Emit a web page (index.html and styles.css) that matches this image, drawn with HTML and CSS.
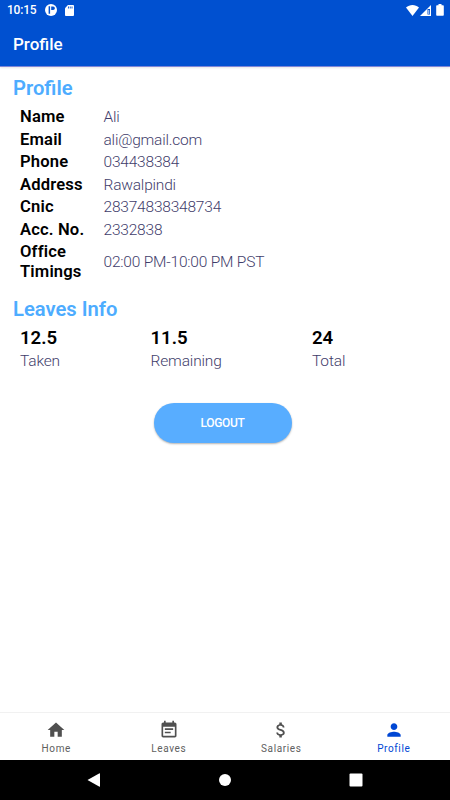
FILE: index.html
```html
<!DOCTYPE html>
<html lang="en">
<head>
    <meta charset="UTF-8">
    <meta name="viewport" content="width=device-width, initial-scale=1.0">
    <title>Profile</title>
    <link rel="stylesheet" href="styles.css">
</head>
<body>

    <header class="app-header">
        <div class="status-bar">
            <span class="clock">10:15</span>
            <svg class="status-app" width="12" height="12" viewBox="0 0 12 12">
                <circle cx="6" cy="6" r="6" fill="#fff"/>
                <path d="M3.6 2.2h1.5v7.6H3.6zM6.2 2.4h1.9a1.7 1.7 0 0 1 0 3.6H6.2z" fill="#0050d0"/>
            </svg>
            <svg class="status-card" width="9" height="11" viewBox="0 0 10 11" preserveAspectRatio="none">
                <path d="M3.2 0H9a1 1 0 0 1 1 1v9a1 1 0 0 1-1 1H1a1 1 0 0 1-1-1V3.2z" fill="#fff"/>
                <path d="M3.3 1.5h1v2h-1zM5.3 1.5h1v2h-1zM7.3 1.5h1v2h-1z" fill="#0050d0"/>
            </svg>
            <div class="status-right">
                <svg width="13" height="11" viewBox="0 0 13 11">
                    <path d="M0 2.6C3.6-.8 9.4-.8 13 2.6L6.5 11z" fill="#fff"/>
                </svg>
                <svg class="signal" width="11" height="11" viewBox="0 0 11 11">
                    <path d="M11 0v11H0z" fill="#fff"/>
                    <path d="M7.5 4h2.5v5.5H7.5z" fill="#0050d0"/>
                    <path d="M8.4 5h.8v4h-.8z" fill="#fff"/>
                </svg>
                <svg class="battery" width="8" height="12" viewBox="0 0 8 12">
                    <path d="M2.5 0h3v1.2H7a.8.8 0 0 1 .8.8v9a.8.8 0 0 1-.8.8H1a.8.8 0 0 1-.8-.8V2a.8.8 0 0 1 .8-.8h1.5z" fill="#fff"/>
                </svg>
            </div>
        </div>
        <h1>Profile</h1>
    </header>

    <main class="content">
        <h2>Profile</h2>
        <dl class="details">
            <dt>Name</dt>
            <dd>Ali</dd>
            <dt>Email</dt>
            <dd>ali@gmail.com</dd>
            <dt>Phone</dt>
            <dd>034438384</dd>
            <dt>Address</dt>
            <dd>Rawalpindi</dd>
            <dt>Cnic</dt>
            <dd>28374838348734</dd>
            <dt>Acc. No.</dt>
            <dd>2332838</dd>
            <dt class="two-lines">Office Timings</dt>
            <dd>02:00 PM-10:00 PM PST</dd>
        </dl>

        <h2>Leaves Info</h2>
        <div class="leaves">
            <div class="leave"><strong>12.5</strong><span>Taken</span></div>
            <div class="leave"><strong>11.5</strong><span>Remaining</span></div>
            <div class="leave"><strong>24</strong><span>Total</span></div>
        </div>

        <button type="button" class="logout">LOGOUT</button>
    </main>

    <nav class="tabs">
        <a class="tab">
            <svg width="20" height="20" viewBox="0 0 24 24"><path d="M10 20v-6h4v6h5v-8h3L12 3 2 12h3v8z"/></svg>
            <span>Home</span>
        </a>
        <a class="tab">
            <svg width="20" height="20" viewBox="0 0 24 24"><path d="M17 10H7v2h10v-2zm2-7h-1V1h-2v2H8V1H6v2H5c-1.11 0-1.99.9-1.99 2L3 19c0 1.1.89 2 2 2h14c1.1 0 2-.9 2-2V5c0-1.1-.9-2-2-2zm0 16H5V8h14v11zm-5-5H7v2h7v-2z"/></svg>
            <span>Leaves</span>
        </a>
        <a class="tab">
            <svg width="20" height="20" viewBox="0 0 24 24"><path d="M11.8 10.9c-2.27-.59-3-1.2-3-2.15 0-1.09 1.01-1.85 2.7-1.85 1.78 0 2.44.85 2.5 2.1h2.21c-.07-1.72-1.12-3.3-3.21-3.81V3h-3v2.16c-1.94.42-3.5 1.68-3.5 3.61 0 2.31 1.91 3.46 4.7 4.13 2.5.6 3 1.48 3 2.41 0 .69-.49 1.79-2.7 1.79-2.06 0-2.87-.92-2.98-2.1h-2.2c.12 2.19 1.76 3.42 3.68 3.83V21h3v-2.15c1.95-.37 3.5-1.5 3.5-3.55 0-2.84-2.43-3.81-4.7-4.4z"/></svg>
            <span>Salaries</span>
        </a>
        <a class="tab active">
            <svg width="20" height="20" viewBox="0 0 24 24"><path d="M12 12c2.21 0 4-1.79 4-4s-1.79-4-4-4-4 1.79-4 4 1.79 4 4 4zm0 2c-2.67 0-8 1.34-8 4v2h16v-2c0-2.66-5.33-4-8-4z"/></svg>
            <span>Profile</span>
        </a>
    </nav>

    <footer class="system-bar">
        <svg width="14" height="14" viewBox="0 0 14 14"><path d="M.5 7 12.5.3q.5-.2.5.4v12.6q0 .6-.5.4z" fill="#fff"/></svg>
        <svg width="14" height="14" viewBox="0 0 14 14"><circle cx="7" cy="7" r="6" fill="#fff"/></svg>
        <svg width="14" height="14" viewBox="0 0 14 14"><rect x=".5" y=".5" width="13" height="13" rx="1" fill="#fff"/></svg>
    </footer>

</body>
</html>
```
FILE: styles.css
```css
body {
    font-family: Roboto, sans-serif;
    background-color: #fff;
    margin: 0;
    height: 800px;
    display: flex;
    flex-direction: column;
    overflow: hidden;
}

svg {
    display: block;
}

.app-header {
    height: 67px;
    box-sizing: border-box;
    background-color: #0050d0;
    border-bottom: 1px solid #7d86d8;
    color: #fff;
    box-shadow: 0 1px 2px rgba(0, 0, 0, 0.1);
}

.status-bar {
    display: flex;
    align-items: center;
    height: 20px;
    padding: 0 6px 0 7px;
}

.clock {
    font-size: 12px;
    font-weight: 500;
    letter-spacing: -0.2px;
    line-height: 20px;
    width: 38px;
}

.status-card {
    margin-left: 8px;
}

.status-right {
    display: flex;
    align-items: center;
    margin-left: auto;
}

.signal {
    margin-left: 1px;
}

.battery {
    margin-left: 5px;
}

h1 {
    margin: 0;
    padding-left: 13px;
    font-size: 17px;
    line-height: 49px;
    font-weight: 500;
}

.content {
    flex: 1;
    display: flex;
    flex-direction: column;
    padding: 8px 13px 0;
}

h2 {
    margin: 0;
    font-size: 20.2px;
    line-height: 26px;
    font-weight: 600;
    color: #4dacff;
}

.details {
    display: grid;
    grid-template-columns: 83.5px 1fr;
    grid-auto-rows: minmax(22.5px, auto);
    align-items: center;
    margin: 5px 0 13px 7px;
    font-size: 16.6px;
    line-height: 22.5px;
}

dt {
    font-weight: 600;
    letter-spacing: 0.15px;
    color: #000;
}

dd {
    margin: 0;
    font-size: 15.5px;
    font-weight: 300;
    letter-spacing: -0.2px;
    color: #3f3d6b;
}

.two-lines {
    width: 70px;
    padding: 1px 0 2px;
    line-height: 19.5px;
}

.leaves {
    display: grid;
    grid-template-columns: 130.5px 161.5px 1fr;
    margin: 4px 0 0 7px;
}

.leave strong {
    display: block;
    font-size: 18.6px;
    line-height: 24px;
    font-weight: 600;
}

.leave span {
    display: block;
    font-size: 15.5px;
    line-height: 22px;
    font-weight: 300;
    letter-spacing: -0.15px;
    color: #3f3d6b;
}

.logout {
    width: 138px;
    height: 40px;
    margin: 31px 0 0 140.5px;
    padding: 0;
    border: none;
    border-radius: 20px;
    background-color: #58adff;
    box-shadow: 0 1px 2px rgba(0, 0, 0, 0.3);
    color: #fff;
    font-family: inherit;
    font-size: 12px;
    line-height: 40px;
    font-weight: 500;
    letter-spacing: -0.3px;
}

.tabs {
    display: flex;
    height: 48px;
    box-sizing: border-box;
    border-top: 1px solid #f1f1f1;
}

.tab {
    flex: 1;
    display: flex;
    flex-direction: column;
    align-items: center;
    padding-top: 7px;
    font-size: 10px;
    line-height: 17px;
    letter-spacing: 0.6px;
    color: #606060;
    fill: #505050;
}

.tab.active {
    color: #0047d4;
    fill: #0047d4;
}

.system-bar {
    display: flex;
    align-items: center;
    justify-content: center;
    gap: 117px;
    height: 40px;
    background-color: #000;
}
```
